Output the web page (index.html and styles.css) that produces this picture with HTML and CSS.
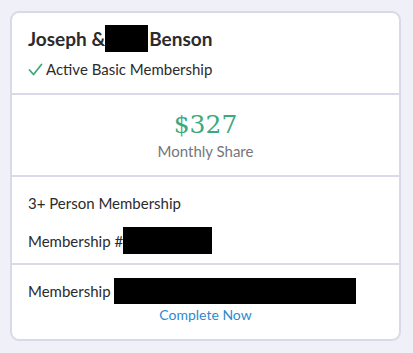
FILE: index.html
```html
<!DOCTYPE html>
<html lang="en">
<head>
<meta charset="utf-8">
<title>Membership</title>
<meta name="viewport" content="width=device-width,initial-scale=1">
<link rel="stylesheet" href="styles.css">
</head>
<body>
<div class="card">
  <!-- member -->
  <section class="sec head">
    <h1 class="name">Joseph &amp;<span class="redact r-name"></span>Benson</h1>
    <p class="status">
      <svg class="check" width="15" height="15" viewBox="0 0 15 15"><path d="M1.5 8 L5.5 12.5 L13.5 2.5" fill="none" stroke="#3ea97c" stroke-width="1.8" stroke-linecap="round" stroke-linejoin="round"/></svg>
      Active Basic Membership
    </p>
  </section>

  <!-- price -->
  <section class="sec price">
    <div class="amount">$327</div>
    <div class="sub">Monthly Share</div>
  </section>

  <!-- details -->
  <section class="sec details">
    <p class="line">3+ Person Membership</p>
    <p class="line">Membership #<span class="redact r-num"></span></p>
  </section>

  <!-- action -->
  <section class="sec action">
    <p class="line">Membership<span class="redact r-long"></span></p>
    <a class="link" href="#">Complete Now</a>
  </section>
</div>
</body>
</html>
```

FILE: styles.css
```css
:root { --line:#d9d9e8; --txt:#2b2b2e; --green:#3ea97c }
body   { margin:0; padding:11px 12px 12px 10px; background:#f0f0f9; font-family:Lato, "Liberation Sans", sans-serif; color:var(--txt) }
.card  { background:#fff; border:2px solid var(--line); border-radius:9px; overflow:hidden }
.sec   { border-top:2px solid var(--line); padding:0 16px; box-sizing:border-box }
.sec:first-child { border-top:0 }
p      { margin:0 }

.head  { height:80px; padding-top:12px }
.name  { margin:0; font-size:19px; font-weight:700; line-height:26px; display:flex; align-items:center }
.status { margin-top:7px; font-size:15px; line-height:20px; display:flex; align-items:center; gap:3px }
.check { flex:none }

.price { height:82px; text-align:center; padding-top:15px }
.amount { font-family:"DejaVu Serif", serif; font-size:25px; color:var(--green); line-height:30px; font-weight:300 }
.sub   { font-size:15px; color:#76767c; line-height:20px; margin-top:1px }

.details { height:88px; padding-top:16px }
.details .line { font-size:15px; line-height:20px; display:flex; align-items:center }
.details .line + .line { margin-top:14px }

.action { height:76px; padding-top:13px; text-align:center }
.action .line { font-size:15px; line-height:26px; display:flex; align-items:center; text-align:left }
.link  { display:inline-block; font-size:14px; color:#2b8bcd; text-decoration:none; line-height:18px; margin-top:2px }

.redact { display:inline-block; background:#000; flex:none }
.r-name { width:43px; height:27px; margin:0 1px 0 0 }
.r-num  { width:89px; height:27px }
.r-long { width:242px; height:26px; margin-left:3px }
```
